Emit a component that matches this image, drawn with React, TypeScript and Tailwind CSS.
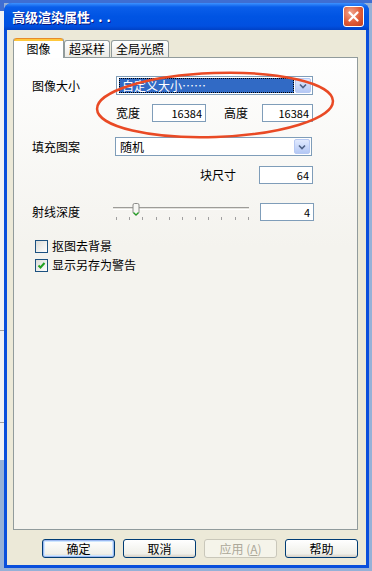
import React from "react";

const font = "font-['Noto_Sans_CJK_SC','Noto_Sans_CJK_JP',sans-serif]";

function Combo({ value, selected }: { value: string; selected?: boolean }) {
  return (
    <div className="flex h-[19px] w-[197px] items-center border border-[#7F9DB9] bg-white p-px">
      <div className="flex h-full flex-1 items-center pl-[1px]">
        {selected ? (
          <div className="flex h-[15px] w-full items-center border border-dotted border-black bg-[#316AC5] pl-[2px] text-white">
            {value}
          </div>
        ) : (
          <span className="pl-[2px]">{value}</span>
        )}
      </div>
      <div className="ml-[1px] flex h-[15px] w-[16px] items-center justify-center rounded-[2px] border border-[#B7C9F3] bg-[linear-gradient(to_bottom,#E1EAFE,#B4C8F5)]">
        <svg width="8" height="6" viewBox="0 0 8 6">
          <path d="M1 1.5 L4 4.5 L7 1.5" fill="none" stroke="#4D6185" strokeWidth="1.6" />
        </svg>
      </div>
    </div>
  );
}

function Field({ value, w }: { value: string; w: string }) {
  return (
    <div className={`flex h-[18px] items-center justify-end border border-[#7F9DB9] bg-white pr-[3px] text-[11px] ${w}`}>
      {value}
    </div>
  );
}

function Check({ checked, label }: { checked?: boolean; label: string }) {
  return (
    <div className="flex items-center gap-[4px] pl-[3px]">
      <div className="flex h-[13px] w-[13px] items-center justify-center border border-[#1C5180] bg-[linear-gradient(135deg,#DCDCD7,#FFFFFF)]">
        {checked && (
          <svg width="9" height="9" viewBox="0 0 9 9">
            <path d="M1.5 4.5 L3.5 6.5 L7.5 2" fill="none" stroke="#21A121" strokeWidth="2" />
          </svg>
        )}
      </div>
      <span>{label}</span>
    </div>
  );
}

function Btn({ children, primary, disabled }: { children: React.ReactNode; primary?: boolean; disabled?: boolean }) {
  return (
    <div
      className={`flex h-[19px] w-[73px] items-center justify-center rounded-[3px] border ${
        disabled
          ? "border-[#C9C7BA] bg-[#F5F4EA] text-[#ACA899]"
          : "border-[#003C74] bg-[linear-gradient(to_bottom,#FFFFFF,#F0F0EA_80%,#D6D0C5)] text-black"
      } ${primary ? "shadow-[inset_0_0_0_1px_#9DB8F0,inset_0_0_0_2px_#CEE7FF]" : ""}`}
    >
      {children}
    </div>
  );
}

export default function App() {
  const ticks = Array.from({ length: 11 }, (_, i) => i);
  return (
    <div className={`relative h-[571px] w-[372px] overflow-hidden bg-[#96B1D7] text-[12px] leading-[14px] text-black ${font}`}>
      <div className="h-[3px] bg-[#3F6ED2]" />
      <div className="flex">
        {/* window behind, left edge */}
        <div className="flex h-[568px] w-[4px] flex-col">
          <div className="h-[8px] bg-[#3F6ED2]" />
          <div className="h-[449px] bg-[#F1F2F5]">
            <div className="mt-[319px] h-px bg-[#A0A0A0]" />
            <div className="mt-[91px] h-px bg-[#A0A0A0]" />
          </div>
        </div>

        {/* dialog */}
        <div className="flex h-[565px] w-[365px] flex-col overflow-hidden rounded-t-[8px] bg-[#0A4FDC]">
          <div className="flex h-[27px] items-center justify-between bg-[linear-gradient(to_bottom,#3D92FF,#0A5EEA_15%,#0054E3_50%,#0150E0_85%,#0041C6)] pl-[8px] pr-[5px]">
            <span className="text-[13px] font-bold text-white [text-shadow:1px_1px_0_#0A1883]">
              高级渲染属性<span className="tracking-[4px]">...</span>
            </span>
            <div className="flex h-[21px] w-[21px] items-center justify-center rounded-[3px] border border-white bg-[radial-gradient(circle_at_35%_30%,#F0A58F,#E05A36_55%,#C23F1E)]">
              <svg width="11" height="11" viewBox="0 0 11 11">
                <path d="M1.5 1.5 L9.5 9.5 M9.5 1.5 L1.5 9.5" stroke="white" strokeWidth="2.2" strokeLinecap="round" />
              </svg>
            </div>
          </div>

          <div className="mx-[3px] mb-[3px] flex flex-1 flex-col bg-[#ECE9D8] pl-[6px] pr-[8px] pt-[8px]">
            {/* tabs */}
            <div className="relative z-10 flex h-[20px] items-end">
              <div className="flex h-[20px] w-[51px] flex-col rounded-t-[3px] border-x border-[#919B9C] bg-white">
                <div className="h-[3px] rounded-t-[3px] bg-[#FFC83C] shadow-[inset_0_1px_0_#E68B2C]" />
                <div className="flex flex-1 items-center justify-center pb-[2px]">图像</div>
              </div>
              <div className="mb-px flex h-[17px] w-[46px] items-center justify-center rounded-t-[3px] border border-b-0 border-[#919B9C] bg-[linear-gradient(to_bottom,#FFFFFF,#ECEBE6)]">
                超采样
              </div>
              <div className="mb-px ml-px flex h-[17px] w-[58px] items-center justify-center rounded-t-[3px] border border-b-0 border-[#919B9C] bg-[linear-gradient(to_bottom,#FFFFFF,#ECEBE6)]">
                全局光照
              </div>
            </div>

            {/* panel */}
            <div className="-mt-px flex h-[473px] flex-col border border-[#919B9C] bg-[linear-gradient(to_bottom,#FEFEFE,#F4F3EE_40%)] pl-[18px]">
              <div className="mt-[18px] flex items-center">
                <span className="w-[84px]">图像大小</span>
                <Combo value="自定义大小……" selected />
              </div>
              <div className="mt-[9px] flex items-center pl-[84px]">
                <span className="w-[36px]">宽度</span>
                <Field value="16384" w="w-[54px]" />
                <span className="ml-[18px] w-[38px]">高度</span>
                <Field value="16384" w="w-[51px]" />
              </div>
              <div className="mt-[15px] flex items-center">
                <span className="w-[83px]">填充图案</span>
                <Combo value="随机" />
              </div>
              <div className="mt-[10px] flex w-[281px] items-center justify-end">
                <span className="mr-[23px]">块尺寸</span>
                <Field value="64" w="w-[54px]" />
              </div>
              <div className="mt-[19px] flex items-start">
                <span className="mt-[2px] w-[81px]">射线深度</span>
                <div className="relative h-[17px] w-[136px]">
                  <div className="absolute left-0 top-[4px] h-[3px] w-full border-y border-t-[#9D9C99] border-b-white bg-[#E3E2DC]" />
                  <svg className="absolute left-[19px] top-[0px]" width="8" height="13" viewBox="0 0 8 13">
                    <path d="M1 2 Q1 0.5 2.5 0.5 L5.5 0.5 Q7 0.5 7 2 L7 9.5 L4 12.5 L1 9.5 Z" fill="#F7F7F4" stroke="#8B8B88" />
                    <path d="M1.5 9.5 L4 12 L6.5 9.5" fill="none" stroke="#21A121" strokeWidth="1.2" />
                  </svg>
                  {ticks.map((i) => (
                    <div key={i} className="absolute top-[14px] h-[3px] w-px bg-[#A0A0A0]" style={{ left: 3 + i * 13.17 }} />
                  ))}
                </div>
                <div className="ml-[11px]">
                  <Field value="4" w="w-[54px]" />
                </div>
              </div>
              <div className="mt-[18px]">
                <Check label="抠图去背景" />
              </div>
              <div className="mt-[5px]">
                <Check label="显示另存为警告" checked />
              </div>
            </div>

            {/* buttons */}
            <div className="mt-[9px] flex justify-end gap-[8px]">
              <Btn primary>确定</Btn>
              <Btn>取消</Btn>
              <Btn disabled>
                应用 (<span className="underline">A</span>)
              </Btn>
              <Btn>帮助</Btn>
            </div>
          </div>
        </div>
      </div>

      {/* hand-drawn highlight */}
      <svg className="pointer-events-none absolute left-0 top-0" width="372" height="571">
        <ellipse cx="215" cy="105" rx="118" ry="32" transform="rotate(-2 215 105)" fill="none" stroke="#E94A25" strokeWidth="2.5" />
      </svg>
    </div>
  );
}
